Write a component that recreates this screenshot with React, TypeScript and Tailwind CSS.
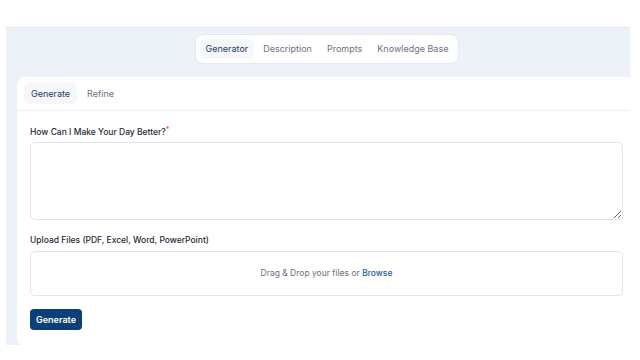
import React, { useState } from 'react';

const topTabs = ['Generator', 'Description', 'Prompts', 'Knowledge Base'];
const subTabs = ['Generate', 'Refine'];

export default function App() {
  const [tab, setTab] = useState('Generator');
  const [sub, setSub] = useState('Generate');

  return (
    <div
      className="w-[640px] h-[360px] bg-white pt-[27px] text-[9px]"
      style={{ fontFamily: 'Inter, "Noto Sans", sans-serif' }}
    >
      <div className="ml-[6px] w-[624px] h-[318px] bg-[#edf1f8] border-t border-[#e3e8f0] flex flex-col">
        {/* top tabs */}
        <div className="flex justify-center pt-[6px] pl-[18px]">
          <div className="flex items-center gap-[3px] bg-white rounded-[8px] border border-[#e4e8ef] px-[4px] py-[4px]">
            {topTabs.map((t) => (
              <button
                key={t}
                onClick={() => setTab(t)}
                className={`px-[6px] h-[20px] rounded-[5px] ${
                  tab === t ? 'bg-[#f5f7fa] text-[#1e3a64]' : 'text-[#6b7280]'
                }`}
              >
                {t}
              </button>
            ))}
          </div>
        </div>

        {/* card */}
        <div className="mt-[13px] ml-[11px] flex-1 bg-white rounded-tl-[8px] rounded-bl-[6px] flex flex-col">
          <div className="flex items-center gap-[3px] px-[7px] pt-[6px] pb-[6px] border-b border-[#eceff3]">
            {subTabs.map((t) => (
              <button
                key={t}
                onClick={() => setSub(t)}
                className={`px-[7px] h-[21px] rounded-[5px] ${
                  sub === t ? 'bg-[#f5f7fa] text-[#1e3a64]' : 'text-[#6b7280]'
                }`}
              >
                {t}
              </button>
            ))}
          </div>

          <div className="px-[13px] pr-[7px] pt-[15px] flex flex-col text-[8.5px]">
            <label className="text-[#1f2937] font-medium leading-[12px]">
              How Can I Make Your Day Better?<sup className="text-[#ef4444] text-[7px]">*</sup>
            </label>
            <textarea className="mt-[4px] h-[78px] w-full border border-[#e2e5ea] rounded-[5px] resize-y outline-none p-2" />

            <label className="mt-[14px] text-[#1f2937] font-medium leading-[12px]">
              Upload Files (PDF, Excel, Word, PowerPoint)
            </label>
            <div className="mt-[5px] h-[45px] w-full border border-[#e2e5ea] rounded-[5px] flex items-center justify-center text-[#6b7280]">
              <span>
                Drag &amp; Drop your files or{' '}
                <span className="text-[#1d5a9e] font-medium">Browse</span>
              </span>
            </div>

            <div className="mt-[13px]">
              <button className="h-[21px] px-[6px] rounded-[4px] bg-[#0b3f7a] text-white font-semibold text-[9px]">
                Generate
              </button>
            </div>
          </div>
        </div>
      </div>
    </div>
  );
}
